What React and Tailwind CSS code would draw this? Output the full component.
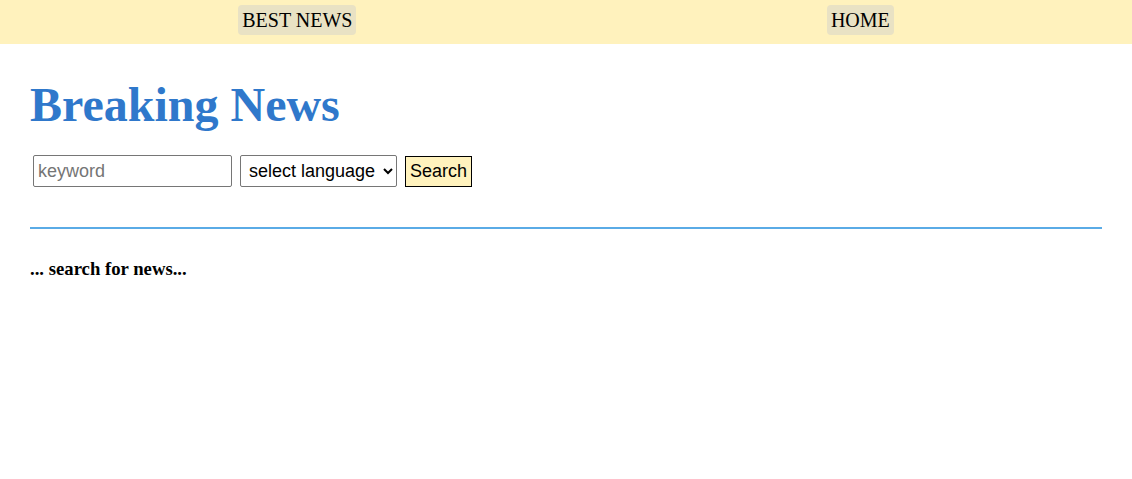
export default function App() {
  return (
    <div className="min-h-screen bg-white font-['Liberation_Serif',serif] text-black">
      {/* Top nav */}
      <nav className="flex h-[44px] items-start justify-around bg-[#fff2bd] px-[3px] pt-[5px]">
        <a className="rounded-[4px] bg-[#e9e2c4] px-1 py-1 text-[20px] leading-[22px]">BEST NEWS</a>
        <a className="rounded-[4px] bg-[#e9e2c4] px-1 py-1 text-[20px] leading-[22px]">HOME</a>
      </nav>

      <main className="px-[30px]">
        <h1 className="mt-[33px] text-[48px] font-bold leading-[55px] text-[#2f78cb]">Breaking News</h1>

        <form className="mt-[23px] flex items-center gap-2 pl-[3px] font-['Liberation_Sans',Arial,sans-serif] text-[18px]">
          <input
            placeholder="keyword"
            className="h-[32px] w-[199px] rounded-[2px] border border-[#767676] px-1 placeholder:text-[#757575]"
          />
          <select className="h-[32px] w-[157px] rounded-[2px] border border-[#767676] bg-white px-1">
            <option>select language</option>
          </select>
          <button type="button" className="h-[31px] border border-black bg-[#fff2bd] px-[4px]">
            Search
          </button>
        </form>

        <hr className="mt-[40px] border-0 border-t-2 border-[#5aabe6]" />

        <h3 className="mt-[29px] text-[18.72px] font-bold leading-[21px]">... search for news...</h3>
      </main>
    </div>
  );
}
